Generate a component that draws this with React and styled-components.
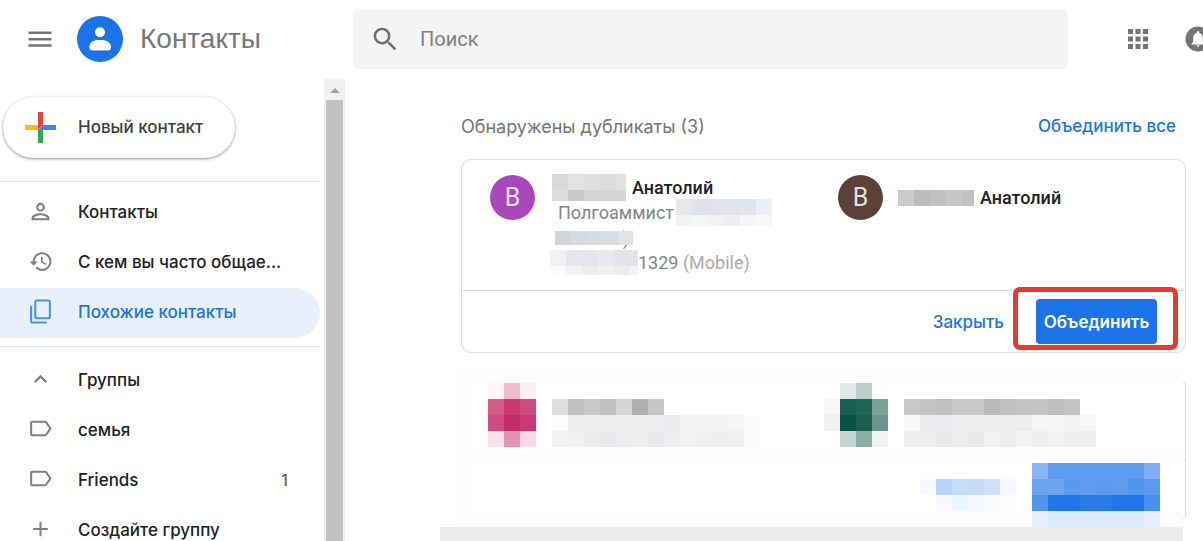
import React from 'react';
import styled, { createGlobalStyle, css } from 'styled-components';

const GlobalStyle = createGlobalStyle`
  * { box-sizing: border-box; }
  body { margin: 0; background: #fff; font-family: Roboto, sans-serif; }
  button, input { font: inherit; border: 0; background: none; padding: 0; }
  button { cursor: pointer; }
`;

const productFont = css`
  font-family: Inter, 'Open Sans', sans-serif;
  font-weight: 500;
`;

const Page = styled.div`
  display: flex;
  flex-direction: column;
  height: 100vh;
  overflow: hidden;
  color: #202124;
`;

const Header = styled.header`
  display: flex;
  align-items: center;
  flex: none;
  padding: 9px 0;
`;

const Brand = styled.div`
  display: flex;
  align-items: center;
  flex: none;
  width: 353px;
  padding-left: 28px;
`;

const IconButton = styled.button`
  display: flex;
  flex: none;
  color: #747474;
`;

const LogoLink = styled.a`
  display: flex;
  align-items: center;
  gap: 17px;
  margin-left: 25px;
  font-family: 'Liberation Sans', sans-serif;
  font-size: 28px;
  line-height: 32px;
  color: #777;
  text-decoration: none;
`;

const Search = styled.label`
  display: flex;
  align-items: center;
  flex: 1;
  height: 60px;
  padding: 0 20px;
  gap: 23px;
  border-radius: 6px;
  background: #f4f4f4;
`;

const SearchInput = styled.input`
  flex: 1;
  font-size: 20px;
  outline: none;
  &::placeholder { color: #808080; opacity: 1; }
`;

const Actions = styled.div`
  display: flex;
  align-items: center;
  flex: none;
  width: 135px;
  padding-left: 60px;
  gap: 37px;
  overflow: hidden;
`;

const Body = styled.div`
  display: flex;
  flex: 1;
  min-height: 0;
`;

const Sidebar = styled.aside`
  display: flex;
  flex: none;
  width: 345px;
  margin-top: 1px;
`;

const SideContent = styled.div`
  flex: 1;
  overflow: hidden;
  padding: 18px 4px 0 0;
`;

const CreateButton = styled.button`
  display: flex;
  align-items: center;
  gap: 22px;
  width: 232px;
  height: 61px;
  margin: 0 0 23px 3px;
  padding: 0 0 1px 22px;
  border-radius: 31px;
  box-shadow: 0 1px 3px 1px rgba(60, 64, 67, 0.18), 0 1px 2px rgba(60, 64, 67, 0.35);
  ${productFont}
  font-size: 17px;
  color: #3c4043;
`;

const Divider = styled.div`
  height: 1px;
  background: #dedede;
`;

const NavList = styled.nav`
  padding: ${(p) => (p.$groups ? '9px' : '6px')} 0 8px;
`;

const NavItem = styled.a`
  display: flex;
  align-items: center;
  height: 50px;
  padding: 0 32px 2px 28px;
  border-radius: 0 25px 25px 0;
  background: ${(p) => (p.$active ? '#e8f0fe' : 'none')};
  color: ${(p) => (p.$active ? '#1a73e8' : '#202124')};
  text-decoration: none;
  ${productFont}
  font-size: 17px;

  svg {
    flex: none;
    margin: 0 25px 2px 0;
    color: ${(p) => (p.$active ? '#4a90ee' : '#808080')};
  }
`;

const NavText = styled.span`
  flex: 1;
  white-space: nowrap;
`;

const NavCount = styled.span`
  font-size: 16px;
  color: #5f6368;
`;

const ScrollTrack = styled.div`
  display: flex;
  flex-direction: column;
  align-items: center;
  width: 21px;
  background: #f1f1f1;
`;

const ScrollArrow = styled.div`
  margin: 9px 0 7px;
  border: 5px solid transparent;
  border-top: 0;
  border-bottom-color: #a3a3a3;
`;

const ScrollThumb = styled.div`
  flex: 1;
  width: 17px;
  background: #c1c1c1;
`;

const Main = styled.main`
  flex: 1;
  min-width: 0;
  padding: 34px 17px 0 116px;
`;

const TitleRow = styled.div`
  display: flex;
  justify-content: space-between;
  align-items: center;
  height: 28px;
  margin-bottom: 19px;
  padding-right: 10px;
`;

const Title = styled.h1`
  margin: 0;
  ${productFont}
  font-weight: 400;
  font-size: 18px;
  color: #757575;
`;

const TextButton = styled.button`
  ${productFont}
  font-size: 17px;
  color: #1a73e8;
`;

const Card = styled.section`
  border: 1px solid #dadce0;
  border-radius: 10px;
`;

const People = styled.div`
  display: grid;
  grid-template-columns: 348px 1fr;
  height: 130px;
  padding: 15px 28px 0;
`;

const Person = styled.div`
  display: flex;
  gap: 15px;
`;

const Avatar = styled.div`
  display: flex;
  align-items: center;
  justify-content: center;
  flex: none;
  width: 45px;
  height: 45px;
  border-radius: 50%;
  background: ${(p) => p.$color};
  color: rgba(255, 255, 255, 0.87);
  font-size: 25px;
`;

const Details = styled.div`
  padding-top: ${(p) => p.$top || 0}px;
`;

const Line = styled.div`
  display: flex;
  align-items: center;
  gap: ${(p) => p.$gap || 0}px;
  height: 25px;
  padding-left: ${(p) => p.$indent || 0}px;
  font-size: 18px;
  color: #80868b;
  white-space: nowrap;
`;

const Name = styled.span`
  font-weight: 500;
  color: #202124;
`;

const Muted = styled.span`
  color: #aaa;
`;

const Covered = styled.div`
  position: relative;
`;

const CoveredText = styled.span`
  position: absolute;
  z-index: -1;
  right: 4px;
  bottom: -4px;
`;

const CardFooter = styled.div`
  display: flex;
  justify-content: flex-end;
  gap: 32px;
  padding: 8px 28px;
  border-top: 1px solid #dadce0;
`;

const MergeWrap = styled.div`
  position: relative;
`;

const MergeButton = styled.button`
  width: 121px;
  height: 45px;
  border-radius: 4px;
  background: #1a73e8;
  color: #fff;
  ${productFont}
  font-weight: 600;
  font-size: 17px;
`;

const RedFrame = styled.div`
  position: absolute;
  inset: -12px -21px -6px -23px;
  border: 5px solid #e53b32;
  border-radius: 7px;
  pointer-events: none;
`;

const MosaicGrid = styled.div`
  display: grid;
  flex: none;
  align-content: start;
  grid-template-columns: repeat(${(p) => p.$cols}, 16px);
  width: ${(p) => (p.$width ? `${p.$width}px` : 'auto')};
  height: ${(p) => (p.$height ? `${p.$height}px` : 'auto')};
  grid-auto-rows: 16px;
  overflow: hidden;
`;

const Cell = styled.span``;

const BlurredRow = styled.div`
  display: flex;
  margin: 14px 0 0 -5px;
`;

const BlurredCard = styled.section`
  flex: 1;
  border: 16px solid #fcfcfc;
  border-right-width: 0;
`;

const BlurredPeople = styled.div`
  display: grid;
  grid-template-columns: 336px 1fr;
  height: 80px;
  padding-left: 16px;
  border-bottom: 16px solid #fcfcfc;
`;

const BlurredPerson = styled.div`
  display: flex;
  gap: 16px;
`;

const BlurredText = styled.div`
  padding-top: 16px;
`;

const BlurredFooter = styled.div`
  display: flex;
  justify-content: flex-end;
  align-items: flex-start;
  gap: 16px;
  height: 48px;
  padding-right: 23px;
`;

const BlurredLink = styled.div`
  padding-top: 16px;
`;

const CardEdge = styled.div`
  width: 3px;
  margin: 14px 0 8px;
  border: 1px solid #dadce0;
  border-left: 0;
  border-radius: 0 8px 8px 0;

  &::before {
    content: '';
    display: block;
    height: 78px;
    border-bottom: 1px solid #dadce0;
  }
`;

const BottomBar = styled.div`
  height: 20px;
  margin: 0 3px 0 -21px;
  background: #ebebeb;
`;

// rows of hex colours, one 16px square each
function Mosaic({ rows, width, height }) {
  const colors = rows.map((row) => row.split(' '));
  return (
    <MosaicGrid $cols={colors[0].length} $width={width} $height={height} aria-hidden="true">
      {colors.flat().map((c, i) => (
        <Cell key={i} style={{ background: `#${c}` }} />
      ))}
    </MosaicGrid>
  );
}

const MenuIcon = () => (
  <svg width="24" height="18" viewBox="0 0 24 18" fill="currentColor">
    <path d="M0.5 1.5h23v2.5h-23zM0.5 8h23v2.5h-23zM0.5 14.300h23v2.500h-23z" />
  </svg>
);

const LogoIcon = () => (
  <svg width="46" height="46" viewBox="0 0 46 46">
    <circle cx="23" cy="23" r="23" fill="#1a73e8" />
    <path d="M12.500 32.500c0-6 5-7.500 10.500-7.500s11 1.500 11 7.500c0 2-1 3-2.500 3h-16.500c-1.500 0-2.500-1-2.500-3z" fill="#1258b5" opacity=".5" />
    <circle cx="23" cy="16.200" r="5" fill="#fff" />
    <path d="M12.300 31.200c0-5.500 5-7.200 10.700-7.200s11 1.700 11 7.200c0 2-1 3.300-2.700 3.300h-16.300c-1.700 0-2.700-1.300-2.700-3.300z" fill="#fff" />
  </svg>
);

const SearchIcon = () => (
  <svg width="24" height="24" viewBox="2.500 2.500 18.500 18.500" fill="#6f6f6f">
    <path d="M15.500 14h-.79l-.28-.27A6.471 6.471 0 0 0 16 9.500 6.500 6.500 0 1 0 9.500 16c1.610 0 3.090-.59 4.230-1.570l.27.280v.79l5 4.990L20.490 19l-4.990-5zm-6 0C7.010 14 5 11.990 5 9.500S7.010 5 9.500 5 14 7.010 14 9.500 11.990 14 9.500 14z" />
  </svg>
);

const AppsIcon = () => (
  <svg width="20" height="20" viewBox="0 0 20 20" fill="currentColor">
    <path d="M0 0h5v5H0zM7.500 0h5v5h-5zM15 0h5v5h-5zM0 7.500h5v5H0zM7.500 7.500h5v5h-5zM15 7.500h5v5h-5zM0 15h5v5H0zM7.500 15h5v5h-5zM15 15h5v5h-5z" />
  </svg>
);

const BellIcon = () => (
  <svg width="26" height="26" viewBox="0 0 26 26">
    <circle cx="13" cy="13" r="12.500" fill="#757575" />
    <path d="M13 5.200c.8 0 1.300.5 1.300 1.200v.6c2.300.6 3.500 2.500 3.500 4.800v4.200l1.700 1.700v.8h-13v-.8l1.700-1.700v-4.200c0-2.300 1.200-4.200 3.500-4.800v-.6c0-.7.5-1.200 1.300-1.200zM11.500 19.300h3c0 .9-.6 1.500-1.500 1.500s-1.500-.6-1.500-1.500z" fill="#fff" />
  </svg>
);

const PlusColorIcon = () => (
  <svg width="31" height="31" viewBox="0 0 31 31">
    <path d="M13 0h5v13l-5 5z" fill="#ea4335" />
    <path d="M0 13h13v5H0z" fill="#fbbc04" />
    <path d="M18 13h13v5H13z" fill="#4285f4" />
    <path d="M13 18h5v13h-5z" fill="#34a853" />
  </svg>
);

const navPaths = {
  person: <path d="M12 3.700a4.200 4.200 0 1 0 0 8.400 4.200 4.200 0 0 0 0-8.400zm0 2a2.200 2.200 0 1 1 0 4.400 2.200 2.200 0 0 1 0-4.400zM12 13.700c-3 0-8.500 1.200-8.500 4.500v2.300h17v-2.300c0-3.300-5.500-4.500-8.500-4.500zm0 2c2.500 0 5.900 1 6.500 2.800h-13c.6-1.800 4-2.800 6.500-2.800z" fill="currentColor" />,
  history: <path d="M13.500 3C8.500 3 4.500 7 4.500 12H1.500l4 4 4-4H6.500c0-3.900 3.100-7 7-7s7 3.100 7 7-3.100 7-7 7c-1.900 0-3.700-.8-4.900-2.100l-1.400 1.400C8.800 20 11 21 13.500 21c5 0 9-4 9-9s-4-9-9-9zm-1 4.500v5.300l4.400 2.600.8-1.300-3.700-2.200V7.500z" fill="currentColor" />,
  copy: (
    <g fill="none" stroke="currentColor" strokeWidth="2">
      <rect x="7" y="1.500" width="14" height="17" rx="1.500" />
      <path d="M3 6.500v14.500q0 1.500 1.500 1.500H18" />
    </g>
  ),
  chevron: <path d="M6.500 14.500L12 9l5.500 5.500" fill="none" stroke="currentColor" strokeWidth="2.200" />,
  label: <path d="M4 4.500h12q1 0 1.500.7l4 5.800-4 5.800q-.5.700-1.500.7H4q-1 0-1-1v-11q0-1 1-1z" fill="none" stroke="currentColor" strokeWidth="2" />,
  plus: <path d="M12 4.500v14M5 11.500h14" fill="none" stroke="currentColor" strokeWidth="2" />,
};

function NavRow({ icon, text, count, active }) {
  return (
    <NavItem href="#" $active={active}>
      <svg width="25" height="25" viewBox="0 0 24 24">{navPaths[icon]}</svg>
      <NavText>{text}</NavText>
      {count && <NavCount>{count}</NavCount>}
    </NavItem>
  );
}

export default function App() {
  return (
    <>
      <GlobalStyle />
      <Page>
        <Header>
          <Brand>
            <IconButton aria-label="Меню"><MenuIcon /></IconButton>
            <LogoLink href="#"><LogoIcon />Контакты</LogoLink>
          </Brand>
          <Search>
            <SearchIcon />
            <SearchInput type="text" placeholder="Поиск" aria-label="Поиск" />
          </Search>
          <Actions>
            <IconButton aria-label="Приложения"><AppsIcon /></IconButton>
            <IconButton aria-label="Уведомления"><BellIcon /></IconButton>
          </Actions>
        </Header>

        <Body>
          <Sidebar>
            <SideContent>
              <CreateButton><PlusColorIcon />Новый контакт</CreateButton>
              <Divider />
              <NavList>
                <NavRow icon="person" text="Контакты" />
                <NavRow icon="history" text="С кем вы часто общае..." />
                <NavRow icon="copy" text="Похожие контакты" active />
              </NavList>
              <Divider />
              <NavList $groups>
                <NavRow icon="chevron" text="Группы" />
                <NavRow icon="label" text="семья" />
                <NavRow icon="label" text="Friends" count="1" />
                <NavRow icon="plus" text="Создайте группу" />
              </NavList>
            </SideContent>
            <ScrollTrack>
              <ScrollArrow />
              <ScrollThumb />
            </ScrollTrack>
          </Sidebar>

          <Main>
            <TitleRow>
              <Title>Обнаружены дубликаты (3)</Title>
              <TextButton>Объединить все</TextButton>
            </TitleRow>

            <Card>
              <People>
                <Person>
                  <Avatar $color="#ab47bc">В</Avatar>
                  <Details>
                    <Line $indent={2} $gap={6}>
                      <Mosaic width={74} height={27} rows={['dadada e3e3e3 e0e0e0 dcdcdc e2e2e2', 'dddddd c8c8c8 d4d4d4 d4d4d4 d6d6d6']} />
                      <Name>Анатолий</Name>
                    </Line>
                    <Line $indent={8} $gap={2}>
                      Полгоаммист
                      <Mosaic width={96} height={27} rows={['e7e8ea e1e2e5 e2e3e6 e2e4e7 e4e5e8 eeeff2', 'f3f3f3 f5f5f5 f1f3f3 eceef1 f5f6f6 f8f8f8']} />
                    </Line>
                    <Line $indent={5}>
                      <Covered>
                        <CoveredText>)</CoveredText>
                        <Mosaic width={78} height={14} rows={['d3d4d7 d8d9db dadbdd dbdcde e2e3e5']} />
                      </Covered>
                    </Line>
                    <Line>
                      <Mosaic width={88} height={25} rows={['f1f3f3 e5e7ea e4e6e9 e8eaec e3e5e8 e2e4e8', 'fbfbfb f2f3f3 ebeeed eff1f1 eceeed f4f4f4']} />
                      <span>1329 <Muted>(Mobile)</Muted></span>
                    </Line>
                  </Details>
                </Person>
                <Person>
                  <Avatar $color="#5d4037">В</Avatar>
                  <Details $top={10}>
                    <Line $gap={6}>
                      <Mosaic width={76} height={16} rows={['cbcbcb bcbcbc c1c1c1 c7c7c7 c1c1c1']} />
                      <Name>Анатолий</Name>
                    </Line>
                  </Details>
                </Person>
              </People>
              <CardFooter>
                <TextButton>Закрыть</TextButton>
                <MergeWrap>
                  <MergeButton>Объединить</MergeButton>
                  <RedFrame />
                </MergeWrap>
              </CardFooter>
            </Card>

            <BlurredRow>
              <BlurredCard>
                <BlurredPeople>
                  <BlurredPerson>
                    <Mosaic rows={['fcf4f7 eebbcf fdf0f4', 'd45b88 c93870 d04c80', 'cf4a7f c42c68 ca3973', 'f8e1ea e193b4 f5d9e4']} />
                    <BlurredText>
                      <Mosaic
                        rows={[
                          'dedede c1c1c1 c8c8c8 c1c1c1 d6d6d6 afafaf c7c7c7 fff fff fff fff fff fff',
                          'fcfcfc edefee ebeeed ebedf0 efefef ecefee ecedf0 eaebee f4f4f4 f4f4f4 f3f3f3 f5f5f5 fbfbfb',
                          'f1f3f3 f0f2f1 eaeceb e7e9eb ebedf0 eef0ef e8e9eb edeef1 f2f2f2 f0f0f0 efefef f0f0f0 fafafa',
                        ]}
                      />
                    </BlurredText>
                  </BlurredPerson>
                  <BlurredPerson>
                    <Mosaic rows={['fff e2eae9 bbcfcc fcfdfd', 'f5f8f7 195f52 216557 7aa298', 'eef3f1 075446 195e50 68978e', 'fff c3d4d2 8baea7 eff3f2']} />
                    <BlurredText>
                      <Mosaic
                        rows={[
                          'c8c8c8 c4c4c4 c0c0c0 c8c8c8 c8c8c8 b9b9b9 c2c2c2 c4c4c4 c4c4c4 bebebe c4c4c4 fff',
                          'f8f8f8 eaebee ebecef ecedf0 ebeeed ebeeed edefef ecedf0 f5f5f5 f6f6f6 f2f2f2 f7f7f7',
                          'eeeff2 eef0ef e8ebe9 ebedf0 e7eae8 f1f3f2 ebeeec f3f5f4 efefef f2f2f2 efefef efefef',
                        ]}
                      />
                    </BlurredText>
                  </BlurredPerson>
                </BlurredPeople>
                <BlurredFooter>
                  <BlurredLink>
                    <Mosaic rows={['f6f9fe b8d3f9 c7dcf8 c7dbf8 d0dffa f5f8fe', 'fff f6f9fe ecf5fe f5f9fe f7fbfe fdfdfe']} />
                  </BlurredLink>
                  <Mosaic
                    rows={[
                      '8ab6f1 5f9cef 5f9cef 5f9cef 5f9cef 5f9cef 5f9cef 82aff4',
                      '6ba4f0 6ba4f0 5a99ee 5f9cef 5d9bee 5f9cef 5295ed 5b9aee',
                      '5294ed 2076e8 2076e8 287be7 287be7 2076e8 2076e8 4a8eef',
                      'e8f0fd dce9f8 dce9f8 dce9f8 dce9f8 dce9f8 dce9f8 e7effc',
                    ]}
                  />
                </BlurredFooter>
              </BlurredCard>
              <CardEdge />
            </BlurredRow>
            <BottomBar />
          </Main>
        </Body>
      </Page>
    </>
  );
}
